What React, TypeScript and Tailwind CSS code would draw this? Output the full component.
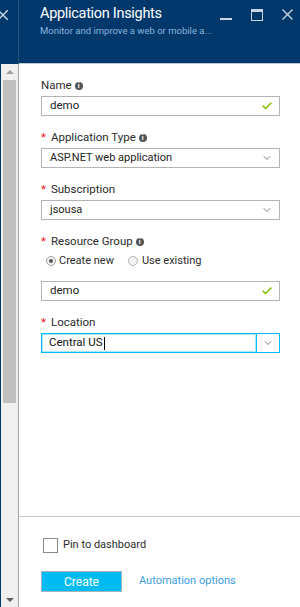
import { ChevronDown, Check } from 'lucide-react'

const FONT = { fontFamily: 'Roboto, "Open Sans", sans-serif' }

function Info() {
  return (
    <span className="ml-[3px] inline-flex h-[8px] w-[8px] items-center justify-center rounded-full bg-[#555] text-[7px] font-bold leading-none text-white">
      i
    </span>
  )
}

function Label({ text, required, info }: { text: string; required?: boolean; info?: boolean }) {
  return (
    <div className="flex h-[14px] items-center text-[11.5px] text-[#2b2b2b]">
      {required && <span className="mr-[5px] text-[#e81123]">*</span>}
      <span>{text}</span>
      {info && <Info />}
    </div>
  )
}

function TextBox({ value }: { value: string }) {
  return (
    <div className="flex h-[20px] items-center border border-[#b4b4b4] pl-[8px] pr-[6px] text-[11.5px] text-[#222]">
      <span className="flex-1">{value}</span>
      <Check size={12} strokeWidth={3} className="text-[#7fba00]" />
    </div>
  )
}

function Select({ value }: { value: string }) {
  return (
    <div className="flex h-[20px] items-center border border-[#b4b4b4] pl-[8px] pr-[6px] text-[11px] text-[#222]">
      <span className="flex-1">{value}</span>
      <ChevronDown size={12} strokeWidth={1.5} className="text-[#555]" />
    </div>
  )
}

export default function App() {
  return (
    <div className="flex h-[607px] w-[300px] overflow-hidden bg-white" style={FONT}>
      {/* left strip */}
      <div className="flex w-[19px] flex-col">
        <div className="relative h-[64px] border-r border-[#24507c] bg-[#00386b]">
          <svg className="absolute left-[-2px] top-[10px]" width="10" height="10" viewBox="0 0 10 10">
            <path d="M0 0 L10 10 M10 0 L0 10" stroke="#c9d5e2" strokeWidth="1.4" />
          </svg>
        </div>
        <div className="flex flex-1 flex-col border-l border-r border-l-[#00386b] border-r-[#a6a6a6] bg-[#f0f0f0]">
          <div className="flex h-[16px] items-center justify-center">
            <div className="h-0 w-0 border-x-[4px] border-b-[4px] border-x-transparent border-b-[#a0a0a0]" />
          </div>
          <div className="ml-[2px] h-[323px] w-[13px] bg-[#c0c0c0]" />
          <div className="flex-1" />
          <div className="flex h-[14px] items-center justify-center">
            <div className="h-0 w-0 border-x-[4px] border-t-[4px] border-x-transparent border-t-[#606060]" />
          </div>
        </div>
      </div>

      {/* blade */}
      <div className="flex flex-1 flex-col">
        <div className="flex h-[64px] border-b border-[#c0c8d0] bg-[#00386b]">
          <div className="flex-1 pl-[21px] pt-[4px]">
            <div className="whitespace-nowrap text-[14.5px] leading-[20px] tracking-[-0.3px] text-white">Application Insights</div>
            <div className="whitespace-nowrap text-[9.5px] leading-[13px] text-[#8db4de]">
              Monitor and improve a web or mobile a...
            </div>
          </div>
          <div className="flex items-start gap-[19px] pr-[7px] pt-[9px]">
            <div className="mt-[9px] h-[2px] w-[12px] bg-[#c9d5e2]" />
            <div className="h-[12px] w-[12px] border border-t-[3px] border-[#c9d5e2]" />
            <svg width="11" height="11" viewBox="0 0 11 11">
              <path d="M0.5 0.5 L10.5 10.5 M10.5 0.5 L0.5 10.5" stroke="#c9d5e2" strokeWidth="1.4" />
            </svg>
          </div>
        </div>

        <div className="flex flex-1 flex-col gap-[15px] pl-[22px] pr-[20px] pt-[15px]">
          <div className="flex flex-col gap-[3px]">
            <Label text="Name" info />
            <TextBox value="demo" />
          </div>
          <div className="flex flex-col gap-[3px]">
            <Label text="Application Type" required info />
            <Select value="ASP.NET web application" />
          </div>
          <div className="flex flex-col gap-[3px]">
            <Label text="Subscription" required />
            <Select value="jsousa" />
          </div>
          <div className="flex flex-col">
            <Label text="Resource Group" required info />
            <div className="mb-[10px] mt-[2px] flex h-[20px] items-center text-[11px] text-[#2b2b2b]">
              <span className="ml-[5px] mr-[3px] flex h-[10px] w-[10px] items-center justify-center rounded-full border border-[#a0a0a0] bg-[#f4f4f4]">
                <span className="h-[4px] w-[4px] rounded-full bg-[#555]" />
              </span>
              <span>Create new</span>
              <span className="ml-[14px] mr-[4px] h-[10px] w-[10px] rounded-full border border-[#b4b4b4] bg-[#f4f4f4]" />
              <span>Use existing</span>
            </div>
            <TextBox value="demo" />
          </div>
          <div className="flex flex-col gap-[3px]">
            <Label text="Location" required />
            <div className="flex h-[20px] border border-[#00bcf2] text-[11.5px] text-[#111]">
              <div className="flex flex-1 items-center border border-[#a8e6f8] pl-[6px]">
                Central US
                <span className="ml-[1px] h-[13px] w-[1px] bg-black" />
              </div>
              <div className="flex w-[23px] items-center justify-center border-l border-[#00bcf2]">
                <ChevronDown size={12} strokeWidth={1.5} className="text-[#555]" />
              </div>
            </div>
          </div>
        </div>

        <div className="flex h-[91px] flex-col border-t border-[#c8c8c8] pl-[24px] pt-[21px]">
          <div className="flex h-[15px] items-center text-[11px] text-[#2b2b2b]">
            <span className="mr-[5px] h-[15px] w-[15px] border border-[#8a8a8a] bg-white" />
            Pin to dashboard
          </div>
          <div className="mt-[18px] flex items-center">
            <button className="-ml-[2px] flex h-[21px] w-[81px] items-center justify-center border border-[#a8b4bc] bg-[#00bcf2] text-[12px] text-white">
              Create
            </button>
            <span className="ml-[17px] text-[11px] text-[#3c9de2]">Automation options</span>
          </div>
        </div>
      </div>
    </div>
  )
}
